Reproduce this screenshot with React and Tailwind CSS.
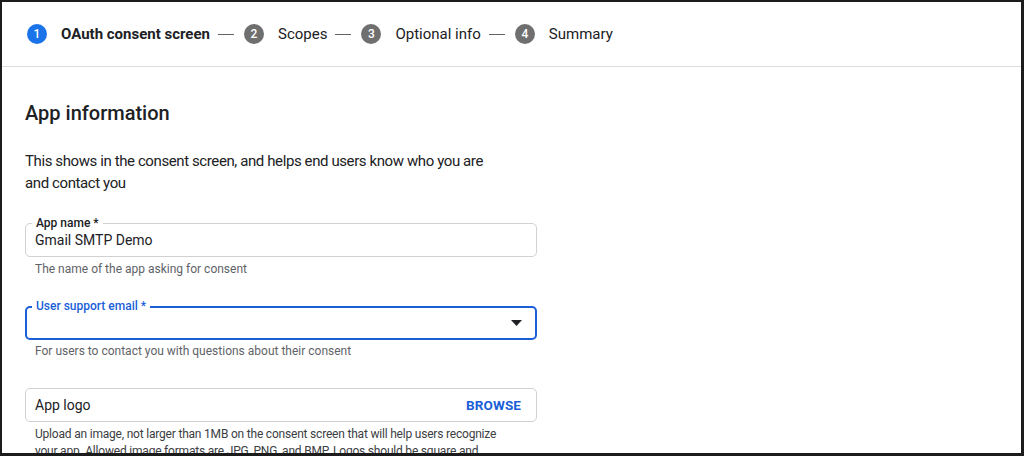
export default function App() {
  const steps = ['OAuth consent screen', 'Scopes', 'Optional info', 'Summary'];

  return (
    <div
      className="w-[1024px] h-[456px] overflow-hidden bg-white border-t-2 border-l-2 border-r-[3px] border-b-[3px] border-[#1c1c1c] text-[#202124]"
      style={{ fontFamily: 'Roboto, "Liberation Sans", sans-serif' }}
    >
      {/* Stepper */}
      <div className="h-[65px] border-b border-[#dadce0] flex items-center pl-[25px]">
        {steps.map((label, i) => (
          <div key={label} className="flex items-center">
            <span
              className={
                i === 0
                  ? 'flex h-5 w-5 items-center justify-center rounded-full bg-[#1a73e8] text-[12px] font-medium text-white'
                  : 'flex h-5 w-5 items-center justify-center rounded-full bg-[#6f6f6f] text-[12px] font-medium text-white'
              }
            >
              {i + 1}
            </span>
            <span className={i === 0 ? 'ml-[14px] text-[15px] font-bold' : 'ml-[14px] text-[15px]'}>
              {label}
            </span>
            {i < steps.length - 1 && <span className="ml-2 mr-[10px] h-px w-4 bg-[#5f6368]" />}
          </div>
        ))}
      </div>

      {/* Content */}
      <div className="pl-[23px] w-[535px]">
        <h2 className="mt-[32px] text-[20px] leading-7 font-medium">App information</h2>
        <p className="mt-[23px] w-[470px] text-[15px] leading-[22px] tracking-[-0.4px]">
          This shows in the consent screen, and helps end users know who you are and contact you
        </p>

        {/* App name */}
        <div className="relative mt-[29px] flex h-[34px] items-center rounded-[5px] border border-[#cfd1d4] px-[9px]">
          <span className="absolute -top-[9px] left-[6px] bg-white px-1 text-[12px] font-medium leading-4">
            App name *
          </span>
          <span className="text-[14px]">Gmail SMTP Demo</span>
        </div>
        <p className="mt-1 pl-[10px] text-[12px] leading-4 text-[#5f6368]">
          The name of the app asking for consent
        </p>

        {/* User support email */}
        <div className="relative mt-[29px] flex h-[34px] items-center justify-end rounded-[5px] border-2 border-[#1a5fd8] pr-[13px]">
          <span className="absolute -top-[10px] left-[5px] bg-white px-1 text-[12px] font-medium leading-4 text-[#1a5fd8]">
            User support email *
          </span>
          <svg width="11" height="6" viewBox="0 0 11 6">
            <path d="M0 0h11L5.5 6z" fill="#202124" />
          </svg>
        </div>
        <p className="mt-[3px] pl-[10px] text-[12px] leading-4 text-[#5f6368]">
          For users to contact you with questions about their consent
        </p>

        {/* App logo */}
        <div className="mt-[29px] flex h-[34px] items-center justify-between rounded-[5px] border border-[#cfd1d4] pl-[9px] pr-[15px]">
          <span className="text-[14px]">App logo</span>
          <span className="text-[13.5px] font-bold tracking-[0.1px] text-[#1a5fd8]">BROWSE</span>
        </div>
        <p className="mt-[4px] w-[484px] pl-[10px] text-[12px] leading-[17px] tracking-[-0.2px] text-[#3c4043]">
          Upload an image, not larger than 1MB on the consent screen that will help users recognize your app.
          Allowed image formats are JPG, PNG, and BMP. Logos should be square and 120px by 120px for the best
          results.
        </p>
      </div>
    </div>
  );
}
